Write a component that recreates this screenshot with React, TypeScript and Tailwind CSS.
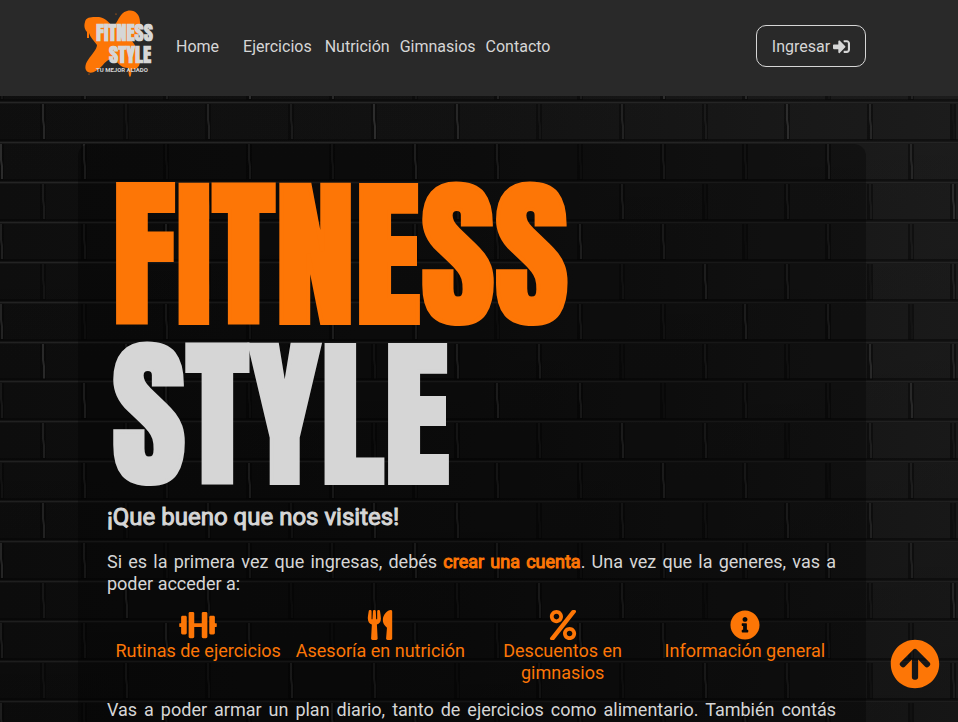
import React from 'react';
import {
  FaArrowCircleUp,
  FaDumbbell,
  FaInfoCircle,
  FaPercent,
  FaSignInAlt,
  FaUtensils,
} from 'react-icons/fa';

const links = [
  { label: 'Home', gap: 'mr-6' },
  { label: 'Ejercicios', gap: 'mr-[13px]' },
  { label: 'Nutrición', gap: 'mr-[10px]' },
  { label: 'Gimnasios', gap: 'mr-[10px]' },
  { label: 'Contacto', gap: '' },
];

const features = [
  { label: 'Rutinas de ejercicios', Icon: FaDumbbell },
  { label: 'Asesoría en nutrición', Icon: FaUtensils },
  { label: 'Descuentos en gimnasios', Icon: FaPercent },
  { label: 'Información general', Icon: FaInfoCircle },
];

const mortar = ['#161616', '#2e2e2e', '#232323', '#282828', '#1c1c1c'];
const rows = Array.from({ length: 30 }, (_, i) => i);
const columns = Array.from({ length: 32 }, (_, i) => i);

/* Dark brick wall behind the whole page, lighter towards the right edge */
function BrickWall() {
  return (
    <svg className="absolute inset-0 -z-10 h-full w-full bg-[#0b0b0b]" aria-hidden="true">
      <defs>
        <linearGradient id="brick" x1="0" y1="0" x2="1" y2="0">
          <stop offset="0" stopColor="#0f0f0f" />
          <stop offset="0.5" stopColor="#131313" />
          <stop offset="1" stopColor="#1d1d1d" />
        </linearGradient>
        <linearGradient id="shade" x1="0" y1="0" x2="0" y2="1">
          <stop offset="0" stopColor="#000" stopOpacity="0" />
          <stop offset="1" stopColor="#000" stopOpacity="0.25" />
        </linearGradient>
      </defs>
      <rect width="100%" height="100%" fill="url(#brick)" />
      {rows.map((r) => {
        const y = Math.round(62 + r * 39.93);
        const start = r % 2 ? 43 : 1;
        return (
          <g key={r}>
            <rect y={y - 3} width="100%" height="3" fill="#050505" opacity="0.5" />
            <rect y={y - 1} width="100%" height="3" fill="#1c1c1c" opacity="0.6" />
            <rect y={y} width="100%" height="1" fill="#262626" />
            {columns.map((c) => {
              const x = Math.round(start + c * 82.7);
              return (
                <g key={c}>
                  <rect x={x - 3} y={y + 2} width="6" height="36" fill="#060606" opacity="0.5" />
                  <path
                    d={`M${x} ${y + 2}v16l1 6v13`}
                    fill="none"
                    stroke={mortar[(r * 3 + c * 7) % 5]}
                    strokeWidth="2"
                  />
                </g>
              );
            })}
          </g>
        );
      })}
      <rect width="100%" height="100%" fill="url(#shade)" />
    </svg>
  );
}

function Logo() {
  return (
    <svg
      viewBox="0 0 72 68"
      className="h-[68px] w-[72px]"
      role="img"
      aria-label="Fitness Style, tu mejor aliado"
    >
      <g fill="#fd7606">
        <path d="M1 12C2 6 10 7 15 7C21 8 25 12 29 17C34 13 35 3 43 1C50-1 56 4 56 12C58 20 53 26 48 31C52 36 55 42 56 51C56 57 52 60 48 59C47 61 48 65 46 67C44 65 45 61 44 58C37 58 34 53 30 49C26 48 22 51 18 56C13 61 8 64 4 62C0 60 1 54 4 50C8 44 13 39 13 35C10 31 6 27 5 23V28H3V22C0 19 0 15 1 12Z" />
        <circle cx="32" cy="4" r="0.6" />
        <circle cx="5" cy="64" r="0.6" />
      </g>
      <g fill="#d6d6d6" fontFamily="Anton, Impact, 'Liberation Sans', sans-serif" fontWeight="700">
        <text x="12" y="31" fontSize="20">FITNESS</text>
        <text x="25" y="53" fontSize="20">STYLE</text>
        <text x="12" y="62" fontSize="6" fontFamily="Roboto, sans-serif">TU MEJOR ALIADO</text>
      </g>
    </svg>
  );
}

export default function App() {
  return (
    <div className="relative isolate flex min-h-screen flex-col font-['Roboto',sans-serif] text-[#d6d6d6]">
      <BrickWall />
      <header className="flex h-24 items-center bg-[#292929] pr-[92px] pl-[84px]">
        <a href="#inicio" className="mr-5 mb-2">
          <Logo />
        </a>
        <nav className="flex pb-[2px] text-base leading-6">
          {links.map(({ label, gap }) => (
            <a key={label} href={'#' + label.toLowerCase()} className={gap}>
              {label}
            </a>
          ))}
        </nav>
        <button
          type="button"
          className="mb-1 ml-auto flex h-[42px] w-[110px] items-center justify-center gap-[3px] rounded-[10px] border border-[#d6d6d6] pt-px text-base"
        >
          Ingresar
          <FaSignInAlt className="size-[17px]" />
        </button>
      </header>

      <main className="mt-12 mr-[92px] ml-[78px] flex-1 rounded-t-xl bg-black/30 pt-8 pr-[30px] pl-[29px]">
        <h1 className="pl-[5px] font-[Anton,Impact,'Liberation_Sans',sans-serif] text-[160px] leading-[160px] font-normal">
          <span className="block text-[#fd7606] [-webkit-text-stroke:4px_#fd7606]">FITNESS</span>
          <span className="block [-webkit-text-stroke:4px_#d6d6d6]">STYLE</span>
        </h1>
        <h2 className="mt-[7px] text-2xl leading-7 font-normal [-webkit-text-stroke:1px_#d6d6d6]">
          ¡Que bueno que nos visites!
        </h2>
        <p className="mt-5 text-justify text-lg leading-[22px]">
          Si es la primera vez que ingresas, debés{' '}
          <a href="#registro" className="text-[#fd7606] [-webkit-text-stroke:1px_#fd7606]">
            crear una cuenta
          </a>
          . Una vez que la generes, vas a poder acceder a:
        </p>
        <ul className="mt-[15px] grid grid-cols-4 text-center text-lg leading-[22px] text-[#fd7606]">
          {features.map(({ label, Icon }) => (
            <li key={label} className="flex flex-col items-center px-1">
              <Icon className="h-[30px] w-[38px]" />
              <span>{label}</span>
            </li>
          ))}
        </ul>
        <p className="mt-[15px] text-justify text-lg leading-[22px] [text-align-last:justify]">
          Vas a poder armar un plan diario, tanto de ejercicios como alimentario. También contás
        </p>
      </main>

      <a href="#inicio" aria-label="Volver arriba" className="fixed right-[18px] bottom-[33px] text-[#fd7606]">
        <FaArrowCircleUp className="h-[50px] w-[50px]" />
      </a>
    </div>
  );
}
